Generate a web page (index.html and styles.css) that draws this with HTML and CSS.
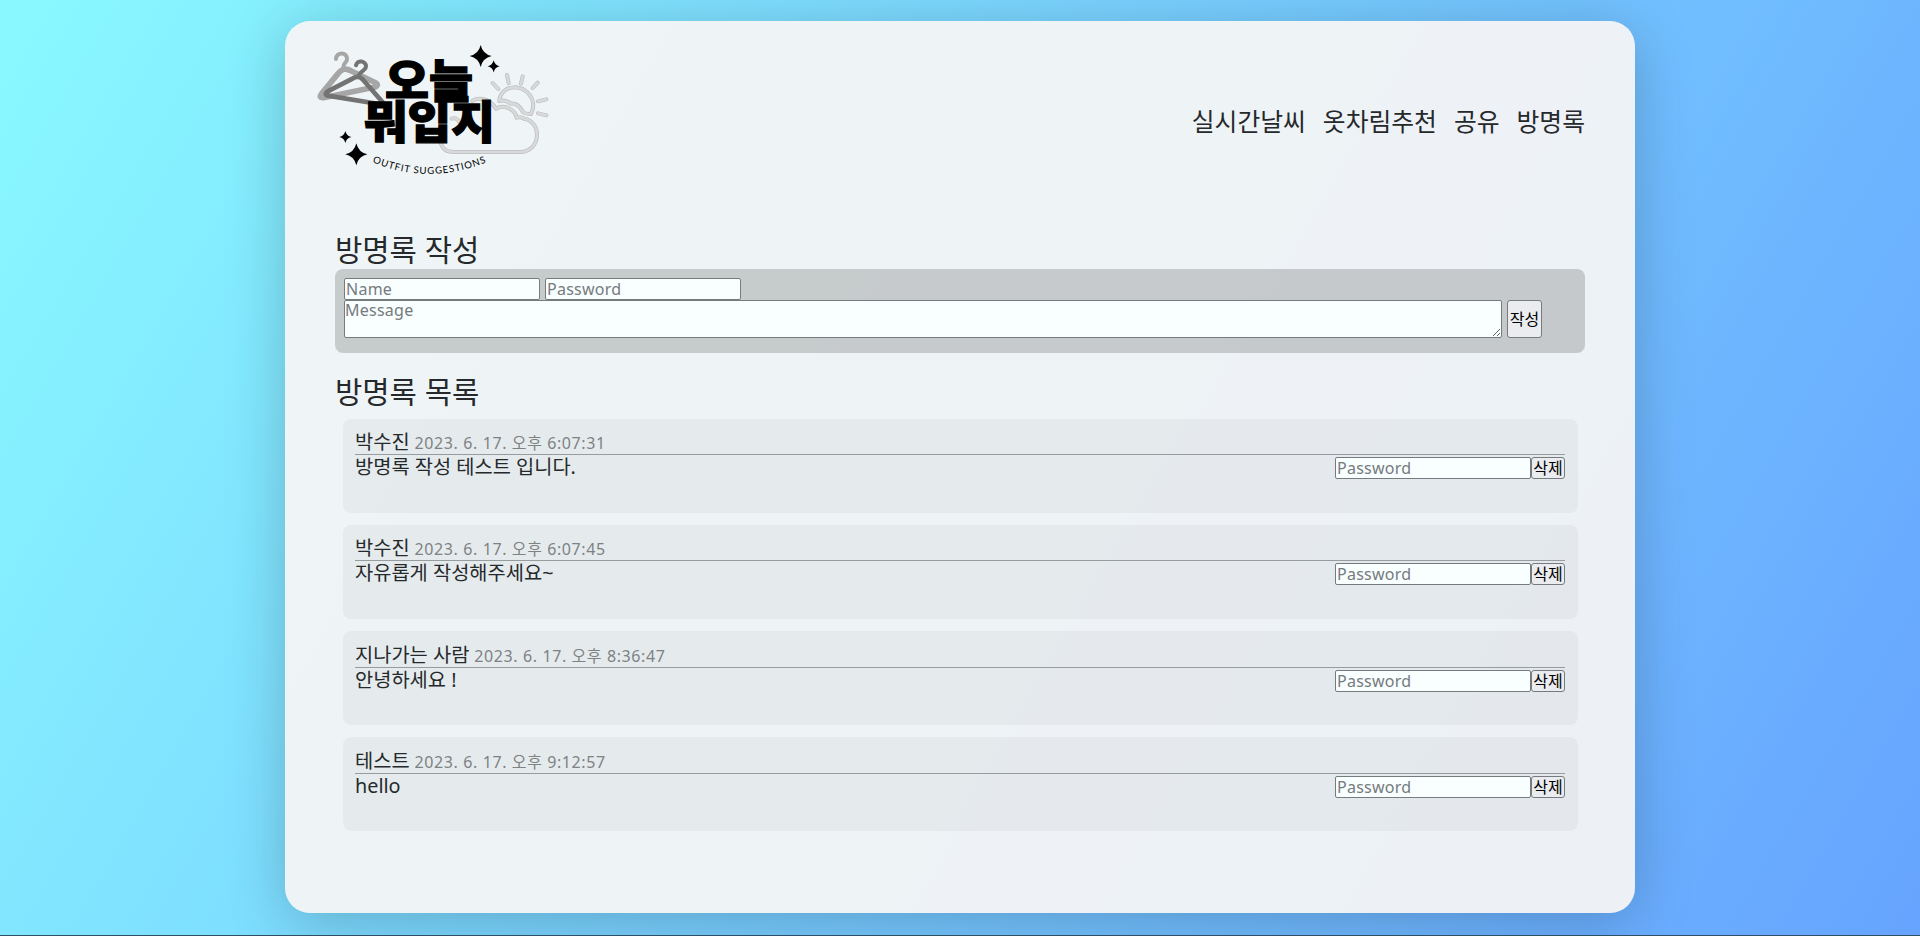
FILE: index.html
```html
<!DOCTYPE html>
<html lang="ko">
<head>
<meta charset="utf-8">
<title>오늘 뭐입지</title>
<link rel="stylesheet" href="styles.css">
</head>
<body>
<div class="card">
  <header class="header">
    <svg class="logo" viewBox="90 60 735 450" role="img" aria-label="오늘 뭐입지">
      <defs>
        <path id="arc" d="M277 441Q445 513 624 440"/>
        <path id="star" d="M0-33Q6-6 33 0Q6 6 0 33Q-6 6-33 0Q-6-6 0-33Z"/>
      </defs>
      <g fill="none" stroke-linecap="round" stroke-linejoin="round">
        <g stroke="#a6a6a6" stroke-width="12">
          <path d="M168 132C168 110 203 110 201 133C200 144 189 143 190 158"/>
          <path stroke-width="17" d="M190 163Q201 160 214 168L288 204Q297 210 286 216L130 248Q115 250 125 236L174 176Q181 166 190 163Z"/>
        </g>
        <g stroke="#737373" stroke-width="12">
          <path d="M228 151C231 133 258 137 258 154C257 168 241 166 236 182"/>
          <path stroke-width="14" d="M315 270L143 242Q132 238 143 229L219 190Q235 181 247 192L312 266"/>
        </g>
        <g class="weather">
          <path d="M482 382Q488 411 522 411H720C784 411 788 318 731 311Q725 304 710 308C704 280 670 268 648 281C626 244 588 248 577 258M515 311Q530 306 537 320"/>
          <path d="M658 258C661 205 741 202 758 258Q763 277 753 297Q738 299 728 290Q715 264 692 266Q677 253 658 258Z"/>
          <path d="M638 204L655 222M681 180L686 204M728 184L723 206M773 203L758 219M799 253L774 259M774 295L799 301"/>
        </g>
        <g class="weather-inner">
          <path d="M482 382Q488 411 522 411H720C784 411 788 318 731 311Q725 304 710 308C704 280 670 268 648 281C626 244 588 248 577 258M515 311Q530 306 537 320"/>
          <path d="M658 258C661 205 741 202 758 258Q763 277 753 297Q738 299 728 290Q715 264 692 266Q677 253 658 258Z"/>
          <path d="M638 204L655 222M681 180L686 204M728 184L723 206M773 203L758 219M799 253L774 259M774 295L799 301"/>
        </g>
      </g>
      <text class="wordmark"><tspan x="315" y="250" textLength="264" lengthAdjust="spacingAndGlyphs">오늘</tspan><tspan x="251" y="372" textLength="394" lengthAdjust="spacingAndGlyphs">뭐입지</tspan></text>
      <use href="#star" x="602" y="123"/>
      <use href="#star" transform="translate(641 154) scale(.55)"/>
      <use href="#star" transform="translate(196 366) scale(.55)"/>
      <use href="#star" x="229" y="418"/>
      <text class="tagline"><textPath href="#arc" textLength="351">OUTFIT SUGGESTIONS</textPath></text>
    </svg>
    <nav class="nav"><a>실시간날씨</a><a>옷차림추천</a><a>공유</a><a>방명록</a></nav>
  </header>
  <main class="content">
    <h2 class="title">방명록 작성</h2>
    <form class="write">
      <div class="row"><input class="field" placeholder="Name"><input class="field" type="password" placeholder="Password"></div>
      <div class="row"><textarea class="message" placeholder="Message"></textarea><button class="button" type="button">작성</button></div>
    </form>
    <h2 class="title list-title">방명록 목록</h2>
    <ul class="list">
      <li class="entry">
        <div class="meta"><span class="name">박수진</span><time class="time">2023. 6. 17. 오후 6:07:31</time></div>
        <div class="body"><p class="text">방명록 작성 테스트 입니다.</p><input class="field" type="password" placeholder="Password"><button class="button delete">삭제</button></div>
      </li>
      <li class="entry">
        <div class="meta"><span class="name">박수진</span><time class="time">2023. 6. 17. 오후 6:07:45</time></div>
        <div class="body"><p class="text">자유롭게 작성해주세요~</p><input class="field" type="password" placeholder="Password"><button class="button delete">삭제</button></div>
      </li>
      <li class="entry">
        <div class="meta"><span class="name">지나가는 사람</span><time class="time">2023. 6. 17. 오후 8:36:47</time></div>
        <div class="body"><p class="text">안녕하세요 !</p><input class="field" type="password" placeholder="Password"><button class="button delete">삭제</button></div>
      </li>
      <li class="entry">
        <div class="meta"><span class="name">테스트</span><time class="time">2023. 6. 17. 오후 9:12:57</time></div>
        <div class="body"><p class="text">hello</p><input class="field" type="password" placeholder="Password"><button class="button delete">삭제</button></div>
      </li>
    </ul>
  </main>
</div>
</body>
</html>
```
FILE: styles.css
```css
* { box-sizing: border-box; margin: 0; padding: 0; }
body {
  height: 936px;
  padding-top: 21px;
  overflow: hidden;
  border-bottom: 1px solid #2f4f66;
  background: linear-gradient(120deg, #89f9ff 0%, #66a4ff 100%);
  color: #26292c;
  font-family: "Noto Sans", "Noto Sans CJK KR", sans-serif;
}
input, textarea, button { font: inherit; }
.card {
  width: 1350px;
  height: 892px;
  margin: 0 auto;
  border-radius: 25px;
  background: rgba(246, 245, 245, .935);
  box-shadow: 0 10px 60px rgba(0, 0, 0, .21);
}
.header {
  display: flex;
  justify-content: space-between;
  align-items: flex-start;
  height: 206px;
  padding: 14px 50px 0 25px;
}
.logo { width: 245px; height: 150px; }
.weather { stroke: #bcbdbe; stroke-width: 12; }
.weather-inner { stroke: #d8d9da; stroke-width: 8; }
.wordmark {
  font: 900 136px "Noto Sans CJK KR", sans-serif;
  stroke: #000;
  stroke-width: 4;
}
.tagline { font: 29px Lato, sans-serif; }
.nav {
  display: flex;
  gap: 17px;
  padding-top: 67px;
  font-size: 24.8px;
  line-height: 38px;
}
.content { padding: 0 50px; }
.title { height: 42px; font-size: 29.7px; font-weight: 400; line-height: 45px; }
.write {
  height: 84px;
  padding: 9px;
  border-radius: 8px;
  background: rgba(0, 0, 0, .17);
}
.row { display: flex; gap: 5px; }
.field, .message {
  border: 1px solid #767b7e;
  border-radius: 2px;
  background: #f9feff;
  font-size: 16px;
  letter-spacing: .25px;
  outline: none;
}
.field { width: 196px; height: 22px; padding: 0 1px; line-height: 19px; }
.message { width: 1158px; height: 38px; line-height: 18px; }
::placeholder { color: #757b7e; }
.button {
  width: 35px;
  border: 1px solid #767b7e;
  border-radius: 3px;
  background: #eaecef;
  color: #000;
  font-size: 16px;
  line-height: 20px;
  white-space: nowrap;
}
.list-title { margin-top: 17px; line-height: 43px; }
.list {
  display: grid;
  gap: 12.3px;
  padding: 7px 7px 0 8px;
  list-style: none;
}
.entry {
  height: 93.8px;
  padding: 9.35px 13px 0 12px;
  border-radius: 8px;
  background: rgba(0, 0, 0, .035);
}
.meta {
  display: flex;
  align-items: baseline;
  gap: 5px;
  height: 27px;
  border-bottom: 1px solid #979c9f;
  line-height: 27px;
}
.name, .text { font-size: 19.8px; }
.time { color: #7d8284; font-size: 16px; letter-spacing: .6px; }
.body { display: flex; padding-top: 2px; }
.text { flex: 1; line-height: 20px; }
.delete { width: 34px; height: 22px; }
```
